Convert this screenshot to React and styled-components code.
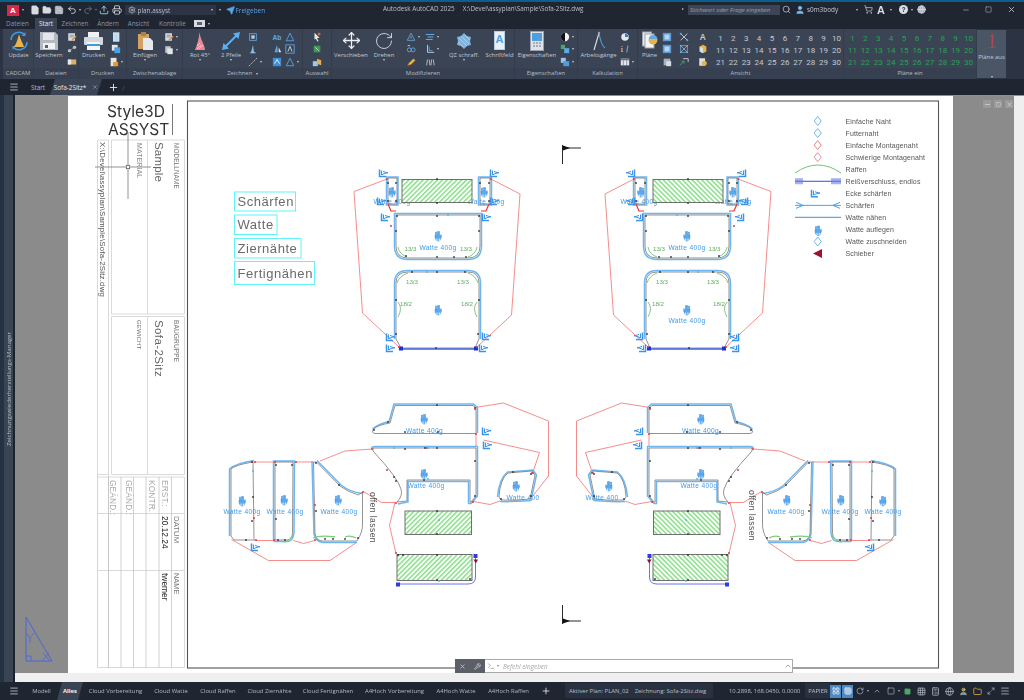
import React from 'react';
import styled, { createGlobalStyle } from 'styled-components';
import {
  File, FolderOpen, Save, Undo2, Redo2, Upload, Printer, Settings, Send, Search, User,
  ShoppingCart, Minus, Square, X, Menu, Plus, Move, RotateCw, Wrench, Grid3x3, LayoutGrid,
  Globe, Maximize2, Folder, Calculator, ChevronUp, Terminal,
} from 'lucide-react';

const GlobalStyle = createGlobalStyle`
html, body {
  margin: 0;
  padding: 0;
  background: #1e2530;
  overflow: hidden;
}
* { box-sizing: border-box; }
`;

const Page = styled.div`
width: 1024px;
height: 700px;
display: flex;
flex-direction: column;
font-family: "Open Sans", "Liberation Sans", sans-serif;
color: #c3cad4;
overflow: hidden;
filter: blur(0.3px);
`;

const TitleBar = styled.div`
height: 18px;
flex: none;
display: flex;
align-items: center;
background: #1f2531;
border-top: 2px solid #0c5f8c;
font-size: 6.4px;
position: relative;
`;

const AppLogo = styled.div`
width: 12px;
height: 11px;
margin-left: 7px;
background: #d8274b;
color: #fff;
display: flex;
align-items: center;
justify-content: center;
font: bold 8px "Liberation Sans", sans-serif;
`;

const Caret = styled.span`
display: inline-block;
flex: none;
width: 0;
height: 0;
margin-left: ${p => p.$ml || 0}px;
border-left: 1.8px solid transparent;
border-right: 1.8px solid transparent;
border-top: 2.4px solid ${p => p.$color || '#c3cad4'};
`;

const SideCaret = styled(Caret)`
position: absolute;
left: 682px;
top: 6px;
transform: rotate(-90deg);
`;

const Qat = styled.div`
display: flex;
align-items: center;
margin-left: ${p => p.$ml || 0}px;
gap: ${p => p.$gap || 3}px;
svg { flex: none; }
`;

const PlanCombo = styled.div`
width: 91px;
height: 10px;
margin-left: 3px;
padding: 0 3px;
display: flex;
align-items: center;
justify-content: space-between;
background: #2d3545;
color: #b6bec9;
`;

const PlanName = styled.div`
display: flex;
align-items: center;
gap: 2px;
`;

const ShareLabel = styled.span`
color: #5aa5e6;
`;

const WindowTitle = styled.div`
position: absolute;
left: 383px;
top: 2px;
white-space: pre;
color: #b9c0ca;
font-size: 6.3px;
`;

const SearchBox = styled.div`
position: absolute;
left: 688px;
top: 3px;
width: 92px;
height: 10px;
padding-left: 2px;
background: #3b4556;
color: #98a1ae;
font-style: italic;
font-size: 6px;
line-height: 10px;
`;

const TitleTools = styled.div`
position: absolute;
left: 782px;
top: 1px;
display: flex;
align-items: center;
height: 13px;
`;

const WindowButtons = styled.div`
position: absolute;
right: 0;
top: 1px;
width: 70px;
height: 13px;
display: flex;
align-items: center;
justify-content: space-around;
`;

const TabRow = styled.div`
height: 11px;
flex: none;
display: flex;
align-items: stretch;
background: #1f2531;
font-size: 6.3px;
position: relative;
`;

const RibbonTab = styled.div`
width: ${p => p.$w}px;
text-align: center;
line-height: 11px;
color: ${p => (p.$active ? '#e4e8ee' : '#8a94a2')};
background: ${p => (p.$active ? '#3a4454' : 'transparent')};
`;

const Ribbon = styled.div`
height: 50px;
flex: none;
display: flex;
padding-left: 3px;
background: #2c3443;
`;

const Panel = styled.div`
width: ${p => p.$w}px;
flex: none;
display: flex;
flex-direction: column;
background: #3a4454;
border-right: 1px solid #333c4b;
`;

const PanelBody = styled.div`
height: 39px;
display: flex;
padding-top: 1px;
`;

const PanelTitle = styled.div`
height: 11px;
text-align: center;
font-size: 5.9px;
line-height: 10px;
color: #b6bdc8;
background: #364050;
white-space: nowrap;
`;

const BigTool = styled.div`
width: ${p => p.$w}px;
flex: none;
margin-left: ${p => p.$ml || 0}px;
display: flex;
flex-direction: column;
align-items: center;
font-size: 5.9px;
line-height: 8px;
white-space: nowrap;
`;

const BigIcon = styled.div`
height: 21px;
display: flex;
align-items: center;
justify-content: center;
margin-bottom: 0;
`;

const MiniCol = styled.div`
width: ${p => p.$w || 12}px;
flex: none;
margin-left: ${p => p.$ml || 0}px;
padding-top: 1px;
display: flex;
flex-direction: column;
`;

const MiniCell = styled.div`
height: 12.5px;
display: flex;
align-items: center;
justify-content: ${p => (p.$start ? 'flex-start' : 'center')};
padding-left: ${p => (p.$start ? 1 : 0)}px;
`;

const NumGrid = styled.div`
margin-left: ${p => p.$ml || 0}px;
padding-top: 2px;
flex: none;
display: grid;
grid-template-columns: repeat(10, 12.9px);
grid-auto-rows: 12.2px;
font-family: "Roboto", sans-serif;
font-size: 8px;
color: ${p => p.$color};
`;

const Num = styled.div`
display: flex;
align-items: center;
justify-content: center;
`;

const PlansOff = styled.div`
width: 29px;
flex: none;
margin: 1px 0;
display: flex;
flex-direction: column;
align-items: center;
background: #4a5566;
font-size: 5.9px;
white-space: nowrap;
`;

const BigOne = styled.div`
font: 400 21px/21px "Liberation Serif", serif;
color: #b5433f;
margin-top: 1px;
`;

const PlansOffLabel = styled.div`
margin-top: 1px;
flex: 1;
`;

const DocTabs = styled.div`
height: 16px;
flex: none;
display: flex;
align-items: center;
background: #1f2531;
font-size: 6.4px;
`;

const BurgerWrap = styled.div`
width: 26px;
flex: none;
padding-left: 9px;
display: flex;
align-items: center;
`;

const Slash = styled.span`
color: #4a5362;
font-size: 8px;
margin: 0 3px;
`;

const DocTab = styled.div`
height: 100%;
display: flex;
align-items: center;
justify-content: center;
gap: 6px;
width: ${p => p.$w}px;
margin-left: ${p => p.$ml || 0}px;
background: ${p => (p.$active ? '#3a4454' : 'transparent')};
color: ${p => (p.$active ? '#e6e9ee' : '#b7bec8')};
clip-path: ${p => (p.$active ? 'polygon(5px 0, 100% 0, calc(100% - 5px) 100%, 0 100%)' : 'none')};
`;

const Workspace = styled.div`
flex: 1;
min-height: 0;
display: flex;
`;

const SidePalette = styled.div`
width: 15px;
flex: none;
position: relative;
background: #394555;
border-left: 4px solid #253242;
border-right: 2px solid #1c222c;
display: flex;
align-items: center;
justify-content: center;
`;

const SideLabel = styled.div`
writing-mode: vertical-rl;
transform: rotate(180deg);
white-space: nowrap;
color: #b4bcc7;
font-size: 6.1px;
`;

const Viewport = styled.div`
flex: 1;
position: relative;
display: flex;
flex-direction: column;
border-top: 1px solid #8a8f96;
background: #efefef;
`;

const ModelArea = styled.div`
flex: 1;
min-height: 0;
display: flex;
`;

const GrayMargin = styled.div`
width: ${p => p.$w}px;
flex: none;
background: #8b8b8b;
display: flex;
flex-direction: column;
justify-content: flex-end;
align-items: flex-start;
padding: 0 0 9px 10px;
`;

const Paper = styled.div`
width: 885px;
flex: none;
background: #fff;
`;

const LightEdge = styled.div`
width: 10px;
flex: none;
background: #efefef;
`;

const BottomEdge = styled.div`
height: 9px;
flex: none;
background: #efefef;
`;

const ViewButtons = styled.div`
position: absolute;
top: 4px;
right: 11px;
display: flex;
gap: 3px;
color: #e3e3e3;
`;

const ViewButton = styled.div`
width: 8px;
height: 8px;
background: #9a9a9a;
display: flex;
align-items: center;
justify-content: center;
`;

const CommandLine = styled.div`
position: absolute;
left: 440px;
top: 563px;
width: 338px;
height: 14px;
display: flex;
align-items: center;
background: #fff;
border: 1px solid #aaa;
font-size: 6.4px;
`;

const CommandTools = styled.div`
width: 30px;
height: 14px;
flex: none;
display: flex;
align-items: center;
justify-content: space-around;
background: #5b6068;
margin: 0 0 0 -1px;
color: #e8e8e8;
`;

const CommandInput = styled.div`
flex: 1;
display: flex;
align-items: center;
gap: 2px;
padding-left: 2px;
color: #a6a6a6;
font-style: italic;
`;

const CommandText = styled.span`
margin-left: 2px;
`;

const LayoutBar = styled.div`
height: 18px;
flex: none;
display: flex;
align-items: center;
background: #1f2531;
font-size: 5.9px;
color: #b9c0ca;
white-space: nowrap;
position: relative;
`;

const LayoutTab = styled.div`
height: 100%;
flex: none;
display: flex;
align-items: center;
justify-content: center;
width: ${p => p.$w}px;
margin-left: ${p => p.$ml || 0}px;
background: ${p => (p.$active ? '#3a4454' : 'transparent')};
color: ${p => (p.$active ? '#eef0f3' : '#b3bac5')};
font-weight: ${p => (p.$active ? 700 : 400)};
clip-path: ${p => (p.$active ? 'polygon(5px 0, 100% 0, calc(100% - 5px) 100%, 0 100%)' : 'none')};
`;

const StatusInfo = styled.div`
position: absolute;
left: 565px;
top: 1px;
height: 15px;
width: 148px;
padding-left: 4px;
display: flex;
align-items: center;
gap: 6px;
background: #293140;
`;

const StatusCoords = styled.div`
position: absolute;
left: 729px;
top: 5px;
`;

const StatusPaper = styled.div`
position: absolute;
left: 805px;
top: 1px;
height: 15px;
width: 26px;
display: flex;
align-items: center;
justify-content: center;
background: #293140;
`;

const StatusIcons = styled.div`
position: absolute;
left: 830px;
top: 2px;
display: flex;
align-items: center;
height: 14px;
`;

const StatusIcon = styled.div`
width: ${p => p.$w || 13.8}px;
height: 13px;
display: flex;
align-items: center;
justify-content: center;
margin-right: ${p => (p.$on ? 1 : 0)}px;
background: ${p => (p.$on ? '#4e89c2' : 'transparent')};
color: ${p => (p.$on ? '#fff' : '#aeb6c1')};
`;

const Sheet = styled.svg`
display: block;
width: 885px;
height: 577px;
`;

const CadText = styled.text`
font-family: ${p => (p.$logo ? '"Inter", "Noto Sans", sans-serif' : '"Liberation Sans", sans-serif')};
font-size: ${p => p.$size}px;
font-weight: 400;
fill: ${p => p.$color || '#555'};
letter-spacing: ${p => p.$ls || 0}px;
`;

/* small ribbon glyphs */
const MINI = {
  note: <><rect x="1.5" y="1.5" width="8" height="9" fill="#d9dde2" /><path d="M3 4h5M3 6h5" stroke="#7d8794" /><path d="M6 10l5-5" stroke="#e08a2f" strokeWidth="1.6" /></>,
  nodes: <><circle cx="3" cy="8" r="2" fill="#c7ccd3" /><circle cx="9" cy="4" r="2" fill="#c7ccd3" /><path d="M3 8l6-4" stroke="#8d98a6" /></>,
  tag: <><rect x="1" y="3" width="10" height="6" fill="#d7b36a" /><rect x="1" y="3" width="4" height="6" fill="#e8e8e8" /></>,
  page: <><rect x="3" y="1" width="6.5" height="10" fill="#b7dcf5" stroke="#e8eef4" /></>,
  pages: <><rect x="1" y="1" width="7" height="7" fill="#e4e7ea" /><rect x="4" y="4" width="7" height="7" fill="#4d9fe0" /></>,
  pdf: <><rect x="2" y="1" width="7" height="10" fill="#e6e6e6" /><rect x="5" y="6" width="6" height="5" fill="#e8962e" /></>,
  doc: <><rect x="1.5" y="1.5" width="6.5" height="8" fill="#bfc5cc" /><rect x="4" y="4" width="6.5" height="7" fill="#e3e5e8" /></>,
  frame: <><rect x="2" y="2" width="8" height="8" fill="none" stroke="#5ea9e8" /><path d="M4 4h4v4H4z" fill="#c5ccd4" /></>,
  wedge: <path d="M6 1l1 8 3 2H2l2-2z" fill="#8dbfe8" />,
  slash: <path d="M1 11L11 1" stroke="#c7ccd3" strokeWidth="1" strokeDasharray="2 1" />,
  ab: <text x="0.5" y="9" fontSize="8" fontFamily="Liberation Sans" fill="#5ea9e8" fontWeight="bold">Ab</text>,
  aTri: <path d="M6 1.5L10.5 10.5H1.5z" fill="none" stroke="#5ea9e8" />,
  aBox: <><rect x="1" y="1" width="10" height="10" fill="none" stroke="#5ea9e8" /><path d="M3.5 9L6 3l2.5 6" fill="none" stroke="#e3e7ec" /></>,
  fill: <><rect x="1" y="1" width="10" height="10" fill="#3f8fdb" /><path d="M3 8l3-5 3 5" fill="none" stroke="#fff" /></>,
  hatchWedge: <><path d="M3 10L6 1l1 9z" fill="#5ea9e8" /><path d="M8 10V4l3 6z" fill="#e3e7ec" /></>,
  sel: <><path d="M3 1l6 6-3 .5 2 3.5-1.5.5-2-3.5L3 9z" fill="#e6e6e6" /><rect x="7" y="1" width="3" height="3" fill="#d96a3a" /></>,
  selGreen: <><rect x="2" y="2" width="8" height="8" fill="#3d9a55" /><path d="M4 4l4 4" stroke="#e6e6e6" /></>,
  selCube: <><rect x="1" y="5" width="6" height="6" fill="#9bc9ec" /><path d="M6 2l5 2v6l-5-2z" fill="#e8b04d" /></>,
  triDots: <><path d="M6 1.5L10.5 10H1.5z" fill="none" stroke="#5ea9e8" /><path d="M6 5v3" stroke="#e5a23c" /></>,
  link: <><circle cx="4" cy="7" r="2.4" fill="none" stroke="#6aaee6" /><circle cx="8.5" cy="7" r="2.4" fill="none" stroke="#6aaee6" /><path d="M2 2h3" stroke="#d8dce0" /></>,
  pencil: <path d="M2 10l2-3 5-5 2 2-5 5z" fill="#e7c24d" stroke="#d96a3a" strokeWidth=".6" />,
  align: <><path d="M1 3h10M3 6h7M1 9h8" stroke="#5ea9e8" strokeWidth="1.4" /></>,
  angle: <><path d="M3 1v9h8" fill="none" stroke="#d8dce0" /><path d="M5 3v5h4" fill="none" stroke="#5ea9e8" /></>,
  feet: <><path d="M3 3l-1 7M5 3l1 7M8 3l-1 7M10 3l1 7" stroke="#c7ccd3" /></>,
  ball: <><circle cx="6" cy="6" r="5" fill="#f2f2f2" /><path d="M6 1a5 5 0 0 0 0 10z" fill="#111" /></>,
  cubes: <><rect x="1" y="1" width="5" height="5" fill="#4aa865" /><rect x="5" y="5" width="6" height="6" fill="#5ea9e8" /></>,
  stack: <><rect x="1" y="1" width="6" height="6" fill="#9ac6ea" /><rect x="4" y="5" width="7" height="6" fill="#4d9fe0" /></>,
  dial: <><circle cx="6" cy="6" r="4.5" fill="#e6e9ec" /><path d="M6 6V2a4 4 0 0 1 4 4z" fill="#2f7fc8" /></>,
  info: <><text x="1" y="10" fontSize="10" fontFamily="Liberation Serif" fill="#e6e9ec">i</text><path d="M8 10l1.5-8" stroke="#5ea9e8" strokeWidth="1.4" /></>,
  table: <><rect x="1" y="2" width="10" height="8" fill="#e3e6ea" /><rect x="1" y="2" width="10" height="2" fill="#6a7482" /><path d="M4 4v6M8 4v6" stroke="#7b8593" /></>,
  scatter: <><path d="M2 2l8 8M10 2l-8 8" stroke="#d8dce0" /><circle cx="2" cy="2" r="1.2" fill="#5ea9e8" /><circle cx="10" cy="10" r="1.2" fill="#5ea9e8" /></>,
  gridFrame: <><rect x="2" y="2" width="8" height="8" fill="none" stroke="#5ea9e8" /><path d="M1 1l10 10M11 1L1 11" stroke="#d8dce0" strokeWidth=".7" /></>,
  arrows: <><path d="M1 10l5-5M6 5h-3M6 5v3" stroke="#4aa865" fill="none" /><path d="M5 2h6v4" stroke="#d8dce0" fill="none" /></>,
  letterA: <text x="2" y="10" fontSize="10" fontFamily="Liberation Sans" fontWeight="bold" fill="#c7ccd3">A</text>,
  cubeOr: <><path d="M2 3l4-2 4 2v6l-4 2-4-2z" fill="#e6b24a" /><path d="M2 3l4 2v6l-4-2z" fill="#d8dfe6" /></>,
  cubeDoc: <><rect x="1.5" y="1.5" width="7" height="9" fill="#d8dfe6" /><circle cx="7.5" cy="7.5" r="3" fill="#e6b24a" /></>,
  blueSq: <><rect x="1" y="1" width="10" height="10" fill="#5b9bd5" /><rect x="3" y="3" width="6" height="6" fill="#b5d7f0" /></>,
  dotsCube: <><rect x="2" y="2" width="8" height="8" fill="#a9b1bb" /><rect x="5" y="5" width="6" height="6" fill="#d8dce0" /></>,
};

const MiniIcon = ({ kind, size = 10, caret }) => (
  <>
    <svg width={size} height={size} viewBox="0 0 12 12">{MINI[kind]}</svg>
    {caret && <Caret $ml={2} />}
  </>
);

const Minis = ({ items, ml, w, start }) => (
  <MiniCol $ml={ml} $w={w}>
    {items.map((it, i) => {
      const [kind, caret] = it.split(':');
      return <MiniCell key={i} $start={start}><MiniIcon kind={kind} caret={!!caret} /></MiniCell>;
    })}
  </MiniCol>
);

const Tool = ({ w, ml, label, caret, children }) => (
  <BigTool $w={w} $ml={ml}>
    <BigIcon>{children}</BigIcon>
    <span>{label}</span>
    {caret && <Caret $ml={0} />}
  </BigTool>
);

const UpdateIcon = () => (
  <svg width="20" height="20" viewBox="0 0 20 20">
    <path d="M2 9a8 8 0 0 1 14-5" fill="none" stroke="#3f9be0" strokeWidth="1.6" />
    <path d="M18 11a8 8 0 0 1-14 5" fill="none" stroke="#3f9be0" strokeWidth="1.6" />
    <path d="M16.5 1v4h-4zM3.5 19v-4h4z" fill="#3f9be0" />
    <path d="M10 3c1 5 4 9 5 13H5c2-3 4-8 5-13z" fill="#e9b44c" />
  </svg>
);

const FloppyIcon = () => (
  <svg width="20" height="20" viewBox="0 0 20 20">
    <path d="M1 1h15l3 3v15H1z" fill="#b4b9c0" />
    <rect x="4" y="2" width="11" height="7" fill="#e3e6ea" />
    <rect x="4" y="12" width="12" height="6" fill="#f0f1f3" />
    <rect x="6" y="14" width="3" height="3" fill="#59616d" />
  </svg>
);

const PrinterIcon = () => (
  <svg width="21" height="20" viewBox="0 0 21 20">
    <rect x="5" y="1" width="11" height="6" fill="#f0f1f3" />
    <rect x="1" y="6" width="19" height="8" rx="1" fill="#d5d8dc" />
    <rect x="4" y="11" width="13" height="8" fill="#f4f5f6" />
    <rect x="4" y="13" width="13" height="2" fill="#3f9be0" />
  </svg>
);

const ClipboardIcon = () => (
  <svg width="17" height="20" viewBox="0 0 17 20">
    <rect x="1" y="3" width="11" height="15" fill="#d3a164" />
    <rect x="4" y="1" width="5" height="4" fill="#a9814f" />
    <path d="M6 7h7l3 3v9H6z" fill="#e7e9ec" />
  </svg>
);

const RotIcon = () => (
  <svg width="12" height="20" viewBox="0 0 12 20">
    <path d="M5.5 1C6 8 11 14 11 19H1C3 14 5 8 5.5 1z" fill="#e58a94" />
    <path d="M3 18l4-4M5 18l4-4M3 15l3-3" stroke="#f7dfe1" strokeWidth=".7" />
  </svg>
);

const TwoArrows = () => (
  <svg width="20" height="20" viewBox="0 0 20 20">
    <path d="M4 16L16 4" stroke="#5db0ef" strokeWidth="2" />
    <path d="M19 1l-7 1.5L17.5 8zM1 19l7-1.5L2.5 12z" fill="#5db0ef" />
  </svg>
);

const QzIcon = () => (
  <svg width="16" height="18" viewBox="0 0 16 18">
    <path d="M8 1l3 3 4 1-1 4 1 4-4 1-3 3-3-3-4-1 1-4-1-4 4-1z" fill="#7fb4dc" />
    <path d="M3 6l8 8M5 4l8 8M2 10l5 5M9 3l5 5" stroke="#c6e0f3" strokeWidth=".6" />
  </svg>
);

const FieldIcon = () => (
  <svg width="11" height="19" viewBox="0 0 11 19">
    <rect x="0.5" y="0.5" width="10" height="18" fill="#e8f1f8" stroke="#b6cfe3" />
    <text x="1.5" y="12" fontSize="11" fontFamily="Liberation Sans" fontWeight="bold" fill="#4d9fe0">A</text>
  </svg>
);

const PropsIcon = () => (
  <svg width="14" height="20" viewBox="0 0 14 20">
    <rect x="0.5" y="0.5" width="13" height="19" fill="#dfe3e7" stroke="#9aa3ae" />
    <rect x="2" y="2" width="10" height="8" fill="#4d9fe0" />
    <path d="M3 12h2M6 12h2M9 12h2M3 15h2M6 15h2M9 15h2" stroke="#6a7482" />
  </svg>
);

const OpsIcon = () => (
  <svg width="16" height="20" viewBox="0 0 16 20">
    <path d="M8 2L3 19" stroke="#dfe3e7" strokeWidth="1.1" />
    <path d="M8 2c1 6 2 12 6 15" fill="none" stroke="#4d9fe0" strokeWidth="1.1" />
    <circle cx="8" cy="2" r="1.2" fill="#9aa3ae" />
  </svg>
);

const PlansIcon = () => (
  <svg width="16" height="19" viewBox="0 0 16 19">
    <rect x="0.5" y="1" width="9" height="14" fill="#e8e9ec" stroke="#9aa3ae" />
    <rect x="3" y="3" width="9" height="14" fill="#f3f4f5" stroke="#9aa3ae" />
    <circle cx="11" cy="9" r="4.5" fill="#e6b24a" />
    <path d="M7 8a4 4 0 0 1 8 0z" fill="#5ea9e8" />
  </svg>
);

const RIBBON_TABS = [
  ['Dateien', 35, false], ['Start', 22, true], ['Zeichnen', 36, false], ['Ändern', 30, false],
  ['Ansicht', 31, false], ['Kontrolle', 37, false],
];

const range = n => Array.from({ length: n }, (_, i) => i + 1);

const Numbers = ({ color, ml }) => (
  <NumGrid $color={color} $ml={ml}>
    {range(30).map(n => <Num key={n}>{n}</Num>)}
  </NumGrid>
);

const LAYOUTS = [
  ['Cloud Vorbereitung', 53, 6], ['Cloud Watte', 34, 12], ['Cloud Raffen', 36, 12], ['Cloud Ziernähte', 43, 12],
  ['Cloud Fertignähen', 50, 12], ['A4Hoch Vorbereitung', 59, 12], ['A4Hoch Watte', 40, 12], ['A4Hoch Raffen', 41, 12],
];

/* the CAD sheet: coordinates are window pixels, mirrored half runs around x = 562.5 */
const MIRROR = 1125;

const PIECES = [
  { d: 'M388 177H397V203H388Z', seam: 'M386.5 176H398V204H386.5Z' },
  { d: 'M480 177H490V203H480Z', seam: 'M478.5 176H491.5V204H478.5Z' },
  { d: 'M396 214H480V245Q480 257 468 257H408Q396 257 396 245Z', seam: 'M394.5 212.5H481.5V245Q481.5 258.5 468 258.5H408Q394.5 258.5 394.5 245Z' },
  { d: 'M396 282Q396 271 408 271H468Q479 271 479 282V338L475 347H401L396 338Z', seam: 'M394.5 282Q394.5 269.5 408 269.5H468Q480.5 269.5 480.5 282V338M394.5 282V338' },
  { d: 'M373.5 428Q378 424 390 422L395 404.5H473L476 407V432.5H375Q371 432 373.5 428Z', seam: 'M372.5 428Q378 423 389 420.5L394 403H473.5L477.5 406.5V432' },
  { d: 'M373 447H476V495L471 501H470V479H407V500L397 501Q403 495 401 488Q398 477 373 450Z', seam: 'M371.5 447Q372 445.5 375 445.5H477.5V495L471 502.5H468.5V480.5H408V501L398 503' },
  { d: 'M499 496Q500 478 508 472L532 470L535 474L530 498Q516 500 501 499Z', seam: 'M497.5 496Q499 478 507.5 471L533 469L536.5 474L531 499.5Q516 501 500 500.5' },
  { d: 'M231 468Q235 464 253 461L254 539H234L231 535Z', seam: 'M229.5 535V468Q235 462.5 254 459.5' },
  { d: 'M275 461H293L292.5 532Q292 539 287 539H275Z', seam: 'M273.5 538.5V460H294.5L294 532Q293 540 288 540.5H273.5' },
  { d: 'M313.5 461H316.5L340 485Q348 491 358.5 494L362.5 491V522Q363 531 357 540H322Q316 539 315 533Z', seam: 'M312 460L314 533Q316 541 323 541.5H357M317 459.5L341 484Q350 491 362 492.5' },
];

const HATCHES = [
  [402, 178.5, 70, 23], [405, 510, 66.5, 23.5], [397, 553.5, 75, 26],
];

const REDS = [
  'M387 178L354 190.5L362.5 312L399 346',
  'M491 178L520 193L511.5 314L477 346',
  'M475 406.5L503.5 402L548.5 420V475L532 496',
  'M483.5 439L539.5 451.5L533 471',
  'M476 433V445',
  'M473.5 500.5L490 503.5L500 500',
  'M231.5 538.5L268.5 559.5H330L356.5 541.5',
  'M293.5 539.5L303.5 542.5L315 539.5',
  'M293.5 461H313',
  'M254 461H275',
  'M254 539.5H275',
  'M320 460L345 450L372 448',
  'M363.5 490.5L381.5 501.5H395',
  'M395 501.5L389.5 524.5L396 552.5',
];

const DOTS = [
  [388, 182], [396, 182], [480, 182], [489, 182], [388, 200], [396, 200], [489, 200], [437, 178], [437, 202],
  [397, 215], [437, 215], [479, 215], [396, 230], [479, 230], [406, 255], [437, 256], [454, 256], [466, 256],
  [412, 271], [437, 271], [465, 271], [396, 299], [479, 299], [396, 333], [478, 333], [436, 347],
  [437, 404], [475, 407], [388, 421], [374, 429], [405, 431], [438, 431],
  [396, 480], [475, 460], [475, 495], [424, 479], [394, 476], [405, 448], [425, 447], [437, 447],
  [531, 473], [513, 471], [531, 495], [501, 498],
  [252, 461], [253, 496], [252, 520], [246, 539], [276, 464], [276, 518], [292, 464], [278, 539], [285, 539],
  [339, 484], [316, 462], [316, 510], [325, 538], [333, 538], [345, 538], [358, 537],
  [437, 510], [437, 533], [398, 554], [403, 554], [437, 554], [437, 579], [470, 578],
];

const RED_DOTS = [
  [387, 178], [491, 178], [255, 461], [275, 461], [296, 461], [256, 539], [274, 539], [315, 539], [475, 408],
  [476, 433], [372, 448], [427, 447], [387, 469], [396, 502], [473, 501], [532, 472], [533, 472], [254, 517],
  [315, 504], [363, 491], [399, 346], [477, 346], [396, 552], [391, 225],
];

const TEAL_DOTS = [[448, 214], [427, 271], [439, 519], [428, 447], [394, 447], [253, 470], [428, 478], [439, 580]];

const CLIPS = [
  [383, 172], [494, 172], [381, 200], [494, 200], [385, 216], [486, 216], [390, 336], [390, 347], [486, 335], [483, 347],
  [486, 430], [487, 444], [255, 546],
];

const HANDS = [[392, 190], [484, 190], [438, 234], [438, 308], [424, 417], [424, 472], [516, 484], [242, 499], [284, 498], [338, 498]];

const GREEN_ARCS = [
  'M398 246Q399 253 407 256', 'M477 246Q476 253 468 256',
  'M397 282Q399 275 408 272', 'M478 282Q476 275 468 272',
  'M398 301Q403 307 398 316', 'M477 301Q472 307 477 316',
];

const BLUE_LABELS = [
  ['Watte 400g', 438, 249], ['Watte 400g', 392, 203], ['Watte 400g', 486, 203],
  ['Watte 400g', 424.5, 431.5], ['Watte 400g', 426, 487], ['Watte 400', 523, 499],
  ['Watte 400g', 242, 513], ['Watte 400g', 285, 513], ['Watte 400g', 339, 513],
];

const GREEN_LABELS = [
  ['13/3', 410.5, 249.5], ['13/3', 466, 249.5], ['13/3', 412, 282.5], ['13/3', 463, 282.5], ['18/2', 406, 304.5], ['18/2', 467, 304.5],
];

const HandMark = ({ x, y }) => (
  <g transform={`translate(${x - 3.5} ${y - 6})`} fill="#5aa8ee" stroke="#3a8ee0" strokeWidth="1">
    <path d="M0.5 6Q0 10 2.5 12H5L7 8L6.5 5.5V6.5H5V2.5H3V6H2V3H1V6Z" strokeWidth=".5" />
    <path d="M2.5 12V9.5M4.8 12V9.5" stroke="#fff" strokeWidth=".9" />
  </g>
);

const ClipMark = ({ x, y }) => (
  <g transform={`translate(${x - 4} ${y - 4})`} fill="none" stroke="#3a94ea">
    <path d="M0.5 0.5V7.5H7" strokeWidth="1.5" />
    <path d="M2.5 1.5V5.5H4" strokeWidth="1.1" />
    <path d="M4 2.5L9 4M4 5L9 3.5" strokeWidth="1" />
  </g>
);

const Diamond = ({ x, y, color }) => (
  <path d={`M${x} ${y - 4.5}L${x + 3.5} ${y}L${x} ${y + 4.5}L${x - 3.5} ${y}Z`} fill="none" stroke={color} strokeWidth=".9" />
);

const HalfGeometry = () => (
  <>
    {REDS.map((d, i) => <path key={i} d={d} fill="none" stroke="#f27070" strokeWidth=".8" />)}
    {PIECES.map((p, i) => <path key={i} d={p.seam} fill="none" stroke="#6db6f4" strokeWidth="1.5" />)}
    {PIECES.map((p, i) => <path key={i} d={p.d} fill="none" stroke="#777" strokeWidth=".8" />)}
    {HATCHES.map(([x, y, w, h], i) => (
      <rect key={i} x={x} y={y} width={w} height={h} fill="url(#hatch)" stroke="#6f6f6f" strokeWidth="1" />
    ))}
    {GREEN_ARCS.map((d, i) => <path key={i} d={d} fill="none" stroke="#68b868" strokeWidth=".8" />)}
    <path d="M401 348H476" stroke="#3b5fe0" strokeWidth="1.6" />
    <path d="M399 347.5h4M474 347.5h4" stroke="#1f2fd8" strokeWidth="4" />
    <path d="M398.5 583H468Q475.5 583 475.5 576V556" fill="none" stroke="#5566e6" strokeWidth=".9" />
    <path d="M396 583.5h4M473.5 555h4" stroke="#2d3fe0" strokeWidth="4" />
    <path d="M473.5 558.5h4.5l-2.2 4z" fill="#8d1030" />
    <path d="M388 203L391 210H396" fill="none" stroke="#e33" strokeWidth="1.2" />
    <path d="M489 203L486 210H481" fill="none" stroke="#e33" strokeWidth="1.2" />
    <path d="M313 537Q320 534 335 536M345 536Q350 534 356 537" fill="none" stroke="#7ecb7e" strokeWidth="1.3" />
    <path d="M284 541Q290 540 293 534" fill="none" stroke="#7ecb7e" strokeWidth="1.3" />
    {DOTS.map(([x, y], i) => <rect key={i} x={x - 0.8} y={y - 0.8} width="1.6" height="1.6" fill="#2d2d2d" />)}
    {RED_DOTS.map(([x, y], i) => <circle key={i} cx={x} cy={y} r="1" fill="#e83a3a" />)}
    {TEAL_DOTS.map(([x, y], i) => <circle key={i} cx={x} cy={y} r="1" fill="#5fb8d8" />)}
    {CLIPS.map(([x, y], i) => <ClipMark key={i} x={x} y={y} />)}
    {HANDS.map(([x, y], i) => <HandMark key={i} x={x} y={y} />)}
  </>
);

const PieceLabels = ({ mirror }) => {
  const px = x => (mirror ? MIRROR - x : x);
  return (
    <>
      {BLUE_LABELS.map(([t, x, y], i) => (
        <CadText key={i} x={px(x)} y={y} $size={6.6} $color="#3f9ae8" $ls={0.35} textAnchor="middle">{t}</CadText>
      ))}
      {mirror && <CadText x={MIRROR - 438} y={322} $size={6.6} $color="#3f9ae8" $ls={0.35} textAnchor="middle">Watte 400g</CadText>}
      {GREEN_LABELS.map(([t, x, y], i) => (
        <CadText key={i} x={px(x)} y={y} $size={6.2} $color="#5cae5c" textAnchor="middle">{t}</CadText>
      ))}
    </>
  );
};

const STEPS = [
  ['Schärfen', 234.5, 191, 61, 19], ['Watte', 234.5, 214, 42.5, 19.5],
  ['Ziernähte', 234.5, 237.5, 66.5, 19.5], ['Fertignähen', 234.5, 260.5, 80, 23],
];

const LEGEND = ['Einfache Naht', 'Futternaht', 'Einfache Montagenaht', 'Schwierige Montagenaht', 'Raffen',
  'Reißverschluss, endlos', 'Ecke schärfen', 'Schärfen', 'Watte nähen', 'Watte auflegen', 'Watte zuschneiden', 'Schieber'];

const legendY = i => 120 + i * 12.05;

const vText = (x, y) => `rotate(90 ${x} ${y})`;

const BLOCK_LINES = [
  'M97.5 139V666.5M108.5 139V666.5M97.5 139H108.5M97.5 473.5H108.5',
  'M111.5 139H184.5V313H111.5ZM147.5 139V313',
  'M111.5 315.5H184.5V473.5H111.5ZM147.5 315.5V473.5',
  'M97.5 476H184.5V666.5H97.5Z',
  'M97.5 512.5H184.5M97.5 569.5H184.5',
];

const BLOCK_TEXT = [
  ['MODELLNAME', 173.5, 142, 6.4, '#777', 0.1],
  ['Sample', 154.5, 141, 11.5, '#666', 0.2],
  ['MATERIAL', 136.5, 142, 7, '#888', 0.1],
  ['BAUGRUPPE', 173.5, 319, 6.6, '#777', 0.1],
  ['Sofa-2Sitz', 154.5, 319, 11.5, '#666', 0.4],
  ['GEWICHT', 136.5, 319, 6.2, '#777', 0],
  ['X:\\Devel\\assyplan\\Sample\\Sofa-2Sitz.dwg', 100, 141, 7.9, '#555', 0.2],
  ['GEÄND.:', 110, 479, 8.4, '#aaa', 0.1],
  ['GEÄND.:', 125.5, 479, 8.4, '#aaa', 0.1],
  ['KONTR.', 148.5, 479, 8.4, '#aaa', 0.1],
  ['ERST.:', 161.5, 479, 8.4, '#aaa', 0.1],
  ['DATUM', 174, 515, 7.8, '#777', 0],
  ['20.12.24', 161.5, 515, 8.4, '#222', 0],
  ['NAME', 174, 572, 7.4, '#777', 0],
  ['twemer', 161.5, 572, 8.4, '#222', 0],
];

const Drawing = () => (
  <Sheet viewBox="68 95 885 577">
    <defs>
      <pattern id="hatch" width="3.4" height="3.4" patternUnits="userSpaceOnUse" patternTransform="rotate(-45)">
        <rect width="3.4" height="3.4" fill="#fff" />
        <rect width="3.4" height="1.5" fill="#88e088" />
      </pattern>
    </defs>

    <rect x="187.5" y="100" width="751" height="567" fill="none" stroke="#555" strokeWidth="1.1" />

    <CadText x="107" y="116" $size={15.6} $logo $color="#333">Style3D</CadText>
    <CadText x="108" y="134" $size={15.6} $logo $color="#333">ASSYST</CadText>
    <path d="M172.5 103V134" stroke="#777" />

    <path d={BLOCK_LINES.join('')} fill="none" stroke="#d6d6d6" strokeWidth=".9" />
    <path d="M121 476V666.5M133.5 476V666.5M146 476V666.5M159 476V666.5M171.5 476V666.5M108.5 476V666.5" fill="none" stroke="#bdbdbd" strokeWidth=".7" />
    {BLOCK_TEXT.map(([t, x, y, s, c, ls], i) => (
      <CadText key={i} x={x} y={y} $size={s} $color={c} $ls={ls} transform={vText(x, y)}>{t}</CadText>
    ))}

    <path d="M95 166H151M128 131V198" stroke="#777" strokeWidth=".8" />
    <rect x="126.3" y="164.3" width="3.4" height="3.4" fill="#fff" stroke="#555" strokeWidth=".7" />

    {STEPS.map(([t, x, y, w, h]) => (
      <g key={t}>
        <rect x={x} y={y} width={w} height={h} fill="none" stroke="#62f2f6" strokeWidth="1" />
        <CadText x={x + 3} y={y + h / 2 + 4.5} $size={13} $color="#6a6a6a" $ls={0.55}>{t}</CadText>
      </g>
    ))}

    {LEGEND.map((t, i) => (
      <CadText key={t} x="845.5" y={legendY(i) + 2.5} $size={7} $color="#555" $ls={0.12}>{t}</CadText>
    ))}
    <Diamond x={817.7} y={legendY(0)} color="#63aeea" />
    <Diamond x={817.7} y={legendY(1)} color="#63aeea" />
    <Diamond x={817.7} y={legendY(2)} color="#ee7474" />
    <Diamond x={817.7} y={legendY(3)} color="#d88a94" />
    <path d="M795 172Q818 156 841 172" fill="none" stroke="#74c274" />
    <path d={`M795 ${legendY(5)}H841`} stroke="#3448e0" />
    <path d={`M796 ${legendY(5) - 3}v6M798 ${legendY(5) - 3}v6M800 ${legendY(5) - 3}v6M802 ${legendY(5) - 3}v6M832 ${legendY(5) - 3}v6M834 ${legendY(5) - 3}v6M836 ${legendY(5) - 3}v6M838 ${legendY(5) - 3}v6M840 ${legendY(5) - 3}v6`} stroke="#6a7cea" strokeWidth="1.2" />
    <ClipMark x={815} y={legendY(6)} />
    <path d={`M795 ${legendY(7)}H841M796 ${legendY(7) - 3}l7 3l-7 3M840 ${legendY(7) - 3}l-7 3l7 3`} fill="none" stroke="#45a2ee" />
    <path d={`M795 ${legendY(8)}H841`} stroke="#55abf0" strokeWidth="1.2" />
    <HandMark x={818} y={legendY(9)} />
    <Diamond x={817.7} y={legendY(10)} color="#63aeea" />
    <path d={`M813 ${legendY(11)}L822 ${legendY(11) - 4.5}V${legendY(11) + 4.5}Z`} fill="#9b1232" />

    <path d="M562.5 144V163M562.5 147H581" stroke="#111" strokeWidth=".9" fill="none" />
    <path d="M563 144.5L570 147L563 149.5Z" fill="#111" />
    <path d="M562.5 604V623M562.5 620H581" stroke="#111" strokeWidth=".9" fill="none" />
    <path d="M563 617.5L570 620L563 622.5Z" fill="#111" />

    <PieceLabels />
    <PieceLabels mirror />
    <HalfGeometry />
    <g transform={`translate(${MIRROR} 0) scale(-1 1)`}><HalfGeometry /></g>
    <CadText x="369.5" y="491" $size={8.6} $color="#555" $ls={0.4} transform={vText(369.5, 491)}>offen lassen</CadText>
    <CadText x={MIRROR - 376} y="489" $size={8.6} $color="#555" $ls={0.4} transform={vText(MIRROR - 376, 489)}>offen lassen</CadText>
  </Sheet>
);

const App = () => (
  <Page>
    <GlobalStyle />

    <TitleBar>
      <AppLogo>A</AppLogo>
      <Caret $ml={3} />
      <Qat $ml={6} $gap={2.2}>
        <File size={10} fill="#d8dce2" strokeWidth={1} color="#d8dce2" />
        <FolderOpen size={10} fill="#d8dce2" strokeWidth={1} color="#d8dce2" />
        <Save size={10} fill="#aeb5be" strokeWidth={1.2} color="#d8dce2" />
        <Undo2 size={10} color="#d8dce2" />
        <Caret />
        <Redo2 size={10} color="#6a7382" />
        <Caret $color="#6a7382" />
        <Upload size={10} color="#b7dcf5" />
        <Printer size={10} color="#d8dce2" />
      </Qat>
      <PlanCombo>
        <PlanName>
          <Settings size={8} color="#c9ced6" />
          <span>plan.assyst</span>
        </PlanName>
        <Caret />
      </PlanCombo>
      <Caret $ml={3} />
      <Qat $ml={5} $gap={1}>
        <Send size={9} fill="#5aa5e6" color="#5aa5e6" />
        <ShareLabel>Freigeben</ShareLabel>
      </Qat>
      <WindowTitle>Autodesk AutoCAD 2025     X:\Devel\assyplan\Sample\Sofa-2Sitz.dwg</WindowTitle>
      <SideCaret />
      <SearchBox>Stichwort oder Frage eingeben</SearchBox>
      <TitleTools>
        <Search size={9} color="#c3cad4" />
        <Qat $ml={4} $gap={2}><User size={10} fill="#7fb8ea" color="#7fb8ea" /><span>s0m3body</span></Qat>
        <Caret $ml={18} />
        <Qat $ml={6}><ShoppingCart size={9} color="#c3cad4" /></Qat>
        <Qat $ml={3}>
          <svg width="11" height="10" viewBox="0 0 12 11"><text x="1" y="10" fontSize="12" fontWeight="bold" fontFamily="Liberation Sans" fill="#d8dce2">A</text></svg>
          <Caret />
        </Qat>
        <Qat $ml={7}>
          <svg width="9" height="9" viewBox="0 0 10 10"><circle cx="5" cy="5" r="5" fill="#d8dce2" /><text x="3" y="8" fontSize="7" fontWeight="bold" fontFamily="Liberation Sans" fill="#1f2531">?</text></svg>
          <Caret />
        </Qat>
        <Qat $ml={4}><Globe size={9} fill="#a9b1bb" color="#d8dce2" /></Qat>
      </TitleTools>
      <WindowButtons>
        <Minus size={8} color="#aab2bd" />
        <Square size={7} color="#aab2bd" />
        <X size={9} color="#c9ced6" />
      </WindowButtons>
    </TitleBar>

    <TabRow>
      {RIBBON_TABS.map(([t, w, active]) => <RibbonTab key={t} $w={w} $active={active}>{t}</RibbonTab>)}
      <Qat $ml={3}>
        <svg width="11" height="7" viewBox="0 0 11 7"><rect width="11" height="7" fill="#d8dce2" /><rect x="3" y="2" width="5" height="3" fill="#5a6472" /></svg>
        <Caret />
      </Qat>
    </TabRow>

    <Ribbon>
      <Panel $w={31}>
        <PanelBody><Tool w={31} label="Update"><UpdateIcon /></Tool></PanelBody>
        <PanelTitle>CADCAM</PanelTitle>
      </Panel>
      <Panel $w={45}>
        <PanelBody>
          <Tool w={30} label="Speichern"><FloppyIcon /></Tool>
          <Minis items={['note', 'nodes', 'tag']} ml={2} />
        </PanelBody>
        <PanelTitle>Dateien</PanelTitle>
      </Panel>
      <Panel $w={48}>
        <PanelBody>
          <Tool w={29} label="Drucken"><PrinterIcon /></Tool>
          <Minis items={['page', 'pages', 'pdf:1']} w={15} />
        </PanelBody>
        <PanelTitle>Drucken</PanelTitle>
      </Panel>
      <Panel $w={56}>
        <PanelBody>
          <Tool w={36} label="Einfügen" caret><ClipboardIcon /></Tool>
          <Minis items={['note:1', 'doc:1']} w={16} start />
        </PanelBody>
        <PanelTitle>Zwischenablage</PanelTitle>
      </Panel>
      <Panel $w={120}>
        <PanelBody>
          <Tool w={34} label="Rot 45°" caret><RotIcon /></Tool>
          <Tool w={28} label="2 Pfeile" caret><TwoArrows /></Tool>
          <Minis items={['frame', 'wedge', 'slash:1']} ml={2} w={16} start />
          <Minis items={['ab', 'hatchWedge', 'fill']} ml={8} />
          <Minis items={['aTri', 'aBox', 'aTri:1']} ml={1} w={16} start />
        </PanelBody>
        <PanelTitle>Zeichnen <Caret $ml={2} /></PanelTitle>
      </Panel>
      <Panel $w={29}>
        <PanelBody><Minis items={['sel', 'selGreen', 'selCube']} ml={8} /></PanelBody>
        <PanelTitle>Auswahl</PanelTitle>
      </Panel>
      <Panel $w={183}>
        <PanelBody>
          <Tool w={38} label="Verschieben"><Move size={19} color="#eef0f3" strokeWidth={1.6} /></Tool>
          <Tool w={28} label="Drehen" caret><RotateCw size={20} color="#e4e7eb" strokeWidth={1} /></Tool>
          <Minis items={['triDots:1', 'link', 'pencil']} ml={7} w={16} start />
          <Minis items={['align:1', 'angle:1', 'feet']} ml={3} w={16} start />
          <Tool w={38} ml={5} label="QZ schraff." caret><QzIcon /></Tool>
          <Tool w={33} label="Schriftfeld"><FieldIcon /></Tool>
        </PanelBody>
        <PanelTitle>Modifizieren</PanelTitle>
      </Panel>
      <Panel $w={63}>
        <PanelBody>
          <Tool w={44} label="Eigenschaften"><PropsIcon /></Tool>
          <Minis items={['ball:1', 'cubes:1', 'stack:1']} w={16} start />
        </PanelBody>
        <PanelTitle>Eigenschaften</PanelTitle>
      </Panel>
      <Panel $w={60}>
        <PanelBody>
          <Tool w={41} label="Arbeitsgänge"><OpsIcon /></Tool>
          <Minis items={['dial', 'info', 'table:1']} w={16} start />
        </PanelBody>
        <PanelTitle>Kalkulation</PanelTitle>
      </Panel>
      <Panel $w={206}>
        <PanelBody>
          <Tool w={23} label="Pläne"><PlansIcon /></Tool>
          <Minis items={['blueSq', 'blueSq', 'dotsCube']} />
          <Minis items={['scatter', 'gridFrame', 'arrows']} ml={5} />
          <Minis items={['letterA', 'cubeOr', 'cubeDoc']} ml={7} />
          <Numbers color="#c3cad4" ml={5} />
        </PanelBody>
        <PanelTitle>Ansicht</PanelTitle>
      </Panel>
      <Panel $w={133}>
        <PanelBody><Numbers color="#2aa155" ml={2} /></PanelBody>
        <PanelTitle>Pläne ein</PanelTitle>
      </Panel>
      <PlansOff>
        <BigOne>1</BigOne>
        <PlansOffLabel>Pläne aus</PlansOffLabel>
        <Caret />
      </PlansOff>
    </Ribbon>

    <DocTabs>
      <BurgerWrap><Menu size={10} color="#c3cad4" /></BurgerWrap>
      <DocTab $w={24}>Start</DocTab>
      <DocTab $w={52} $active>Sofa-2Sitz* <X size={6} color="#aab2bd" /></DocTab>
      <Qat $ml={6}><Plus size={11} color="#e6e9ee" /></Qat>
      <Slash>/</Slash>
    </DocTabs>

    <Workspace>
      <SidePalette>
        <SideLabel>Zeichnungswiederherstellungs-Manager</SideLabel>
      </SidePalette>
      <Viewport>
        <ModelArea>
          <GrayMargin $w={53}>
            <svg width="30" height="48" viewBox="0 0 30 48" fill="none" stroke="#4a66d8" strokeWidth="1">
              <path d="M1 1L27 45H1Z" />
              <path d="M1 17l4 5 4-5M5 22v5M1 40h5v5M18 37l6 7M24 37l-6 7" strokeWidth=".8" />
            </svg>
          </GrayMargin>
          <Paper><Drawing /></Paper>
          <GrayMargin $w={61} />
          <LightEdge />
        </ModelArea>
        <BottomEdge />
        <ViewButtons>
          <ViewButton><Minus size={7} /></ViewButton>
          <ViewButton><Square size={5} /></ViewButton>
          <ViewButton><X size={7} /></ViewButton>
        </ViewButtons>
        <CommandLine>
          <CommandTools>
            <X size={7} />
            <Wrench size={7} />
          </CommandTools>
          <CommandInput>
            <Terminal size={8} color="#888" />
            <Caret $color="#888" />
            <CommandText>Befehl eingeben</CommandText>
          </CommandInput>
          <ChevronUp size={8} color="#777" />
        </CommandLine>
      </Viewport>
    </Workspace>

    <LayoutBar>
      <BurgerWrap><Menu size={10} color="#c3cad4" /></BurgerWrap>
      <LayoutTab $w={31}>Modell</LayoutTab>
      <LayoutTab $w={26} $active>Alles</LayoutTab>
      {LAYOUTS.map(([t, w, ml]) => <LayoutTab key={t} $w={w} $ml={ml}>{t}</LayoutTab>)}
      <Qat $ml={12}><Plus size={10} color="#e6e9ee" /></Qat>
      <StatusInfo>
        <span>Aktiver Plan: PLAN_02</span>
        <span>Zeichnung: Sofa-2Sitz.dwg</span>
      </StatusInfo>
      <StatusCoords>10.2898, 168.0450, 0.0000</StatusCoords>
      <StatusPaper>PAPIER</StatusPaper>
      <StatusIcons>
        <StatusIcon $on $w={11}><LayoutGrid size={8} /></StatusIcon>
        <StatusIcon $on $w={11}><Grid3x3 size={8} /></StatusIcon>
        <StatusIcon $w={12}><RotateCw size={8} /></StatusIcon>
        <Caret $ml={1} $color="#aeb6c1" />
        <StatusIcon $w={16}><ChevronUp size={8} /></StatusIcon>
        <StatusIcon $w={12}><Square size={8} /></StatusIcon>
        <Caret $ml={1} $color="#aeb6c1" />
        <StatusIcon $w={15}><Square size={7} color="#4aa865" fill="#4aa865" /></StatusIcon>
        <StatusIcon><Grid3x3 size={9} /></StatusIcon>
        <StatusIcon><Calculator size={9} /></StatusIcon>
        <StatusIcon><Globe size={9} /></StatusIcon>
        <StatusIcon><User size={9} color="#e6b24a" fill="#4d9fe0" /></StatusIcon>
        <StatusIcon><Folder size={9} color="#e6b24a" /></StatusIcon>
        <StatusIcon><Maximize2 size={8} /></StatusIcon>
        <StatusIcon><Menu size={10} /></StatusIcon>
      </StatusIcons>
    </LayoutBar>
  </Page>
);

export default App;
